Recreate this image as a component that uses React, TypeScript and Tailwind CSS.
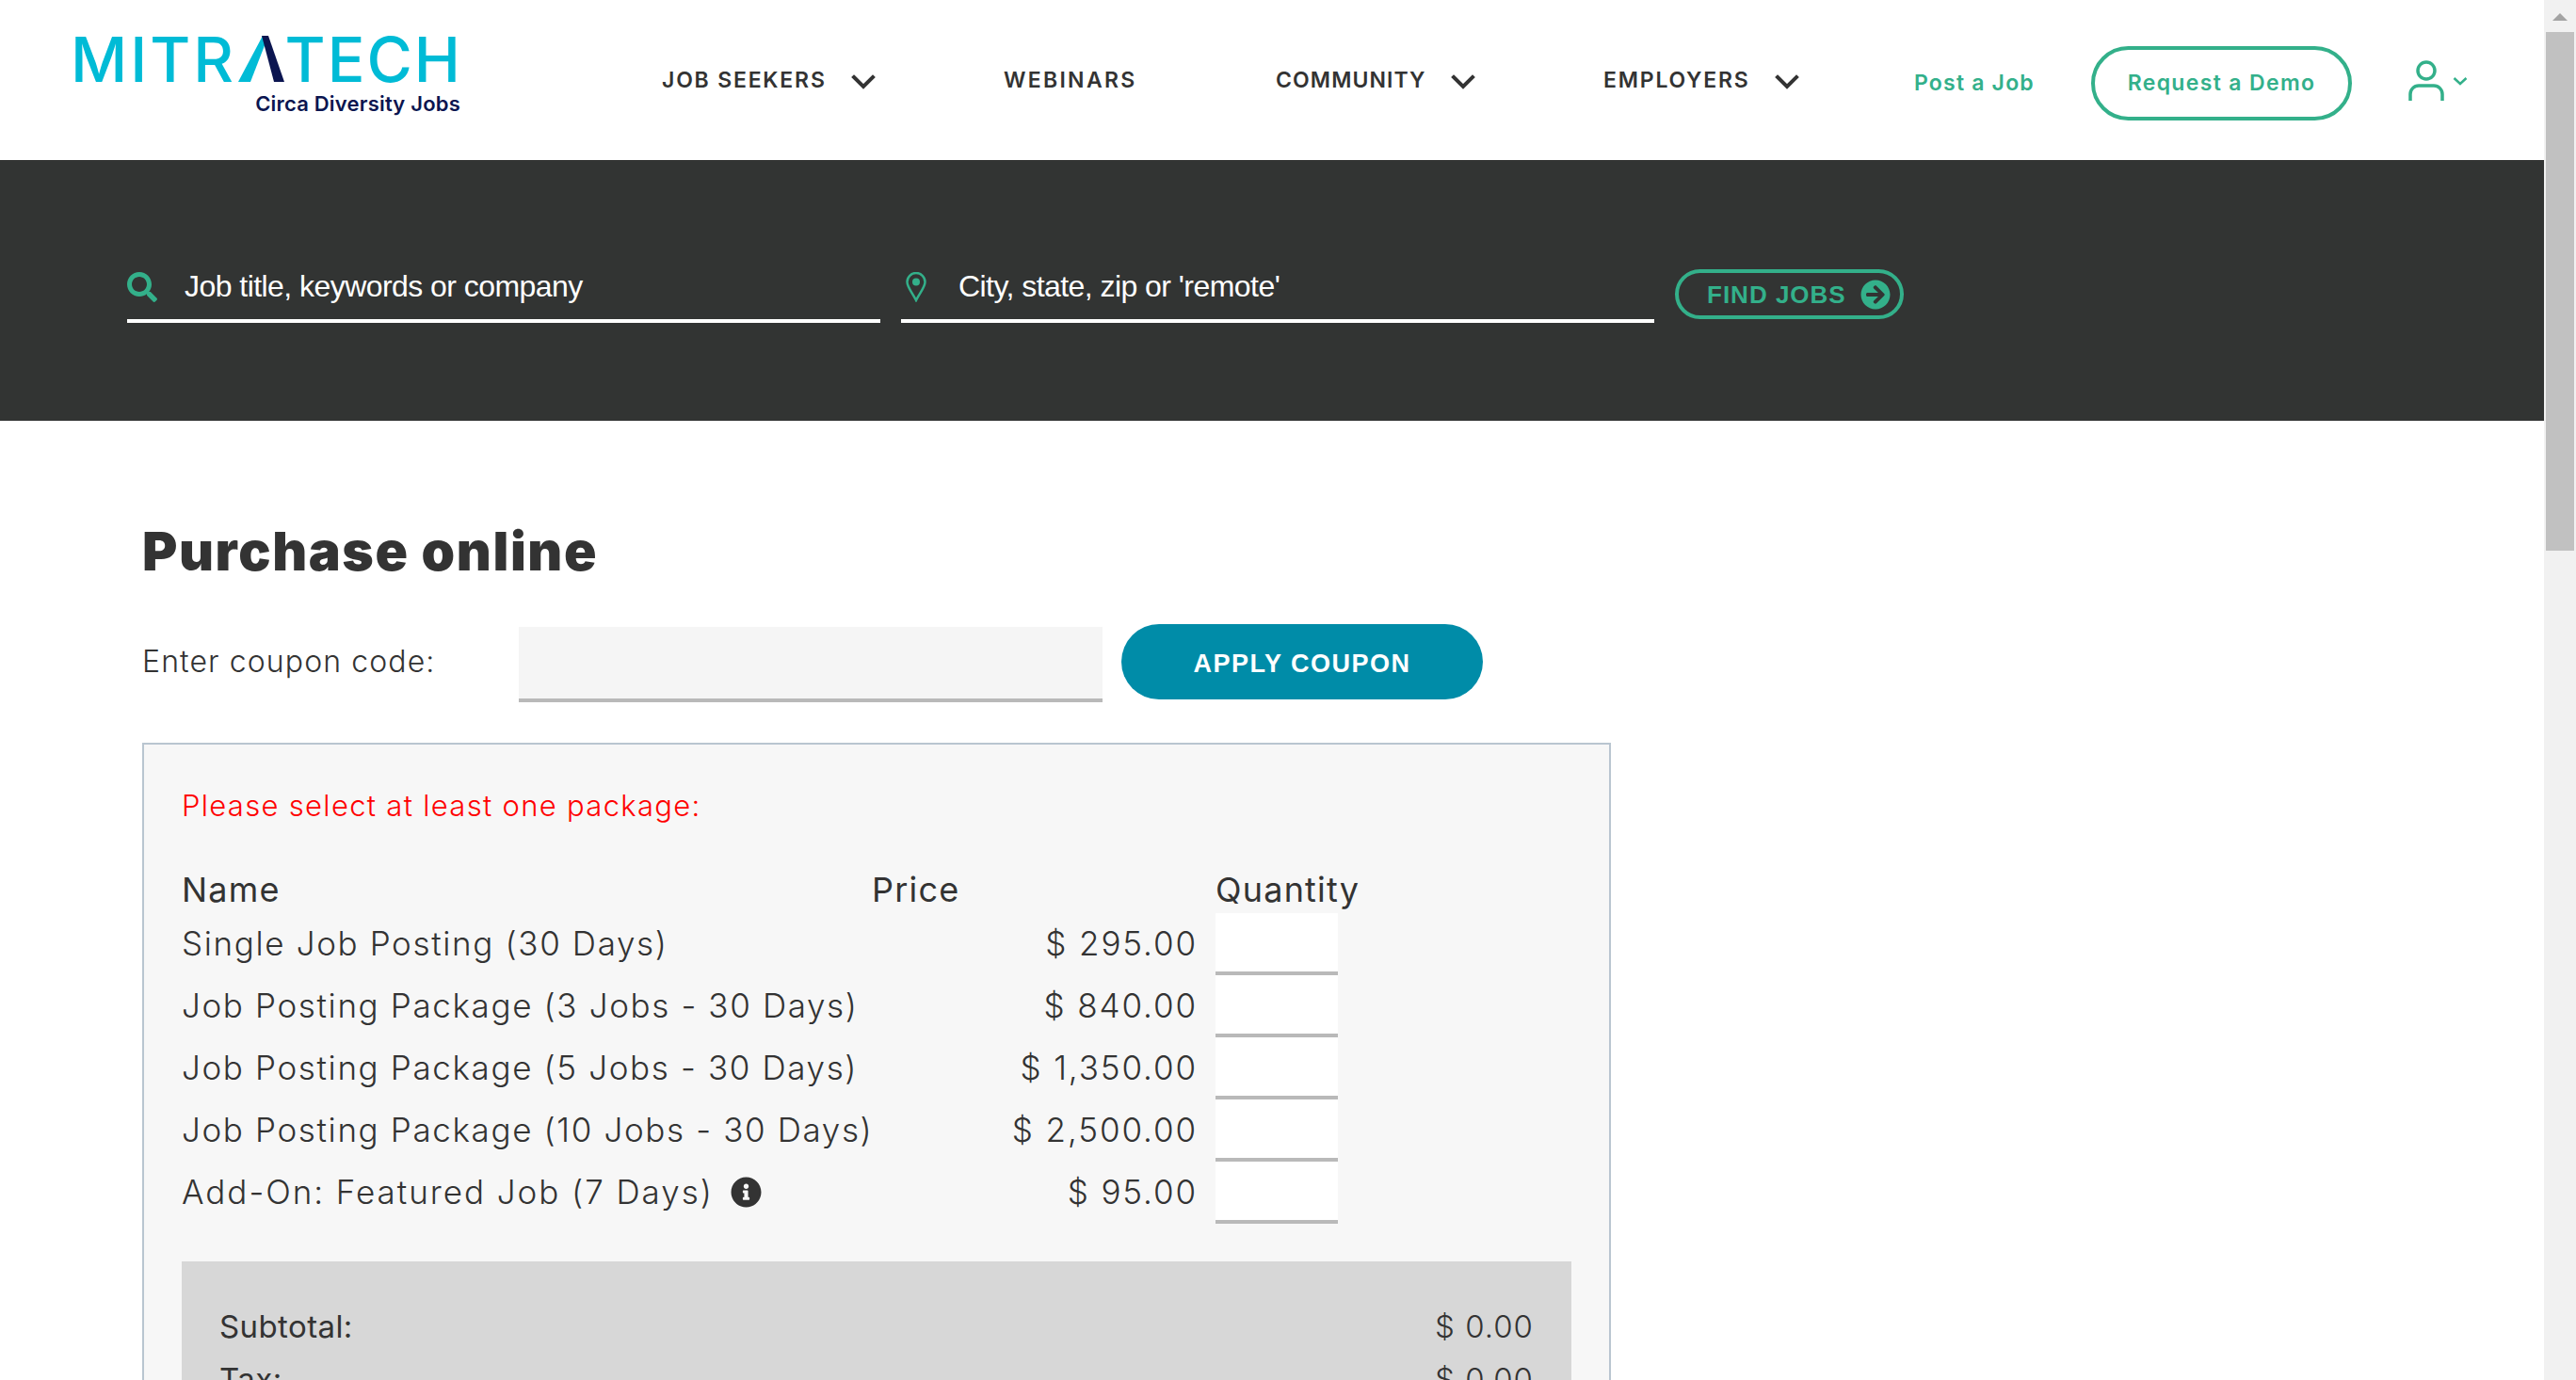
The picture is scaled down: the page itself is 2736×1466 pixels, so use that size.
import React from "react";
import { FaSearch, FaArrowCircleRight, FaInfoCircle } from "react-icons/fa";

const Chevron = ({ className }: { className: string }) => (
  <svg viewBox="0 0 26 16" className={className} fill="none" stroke="#333333" strokeWidth="4" strokeLinecap="square">
    <path d="M3 3 L13 13 L23 3" />
  </svg>
);

const NavItem = ({ label, chevron, className, tracking }: { label: string; chevron?: boolean; className: string; tracking: string }) => (
  <div className={`flex items-center ${className}`}>
    <span className={`whitespace-nowrap text-[23px] font-semibold leading-none text-[#333333] ${tracking}`}>{label}</span>
    {chevron && <Chevron className="ml-[26px] mt-[3px] h-4 w-[26px]" />}
  </div>
);

const packages = [
  { name: "Single Job Posting (30 Days)", price: "$ 295.00" },
  { name: "Job Posting Package (3 Jobs - 30 Days)", price: "$ 840.00" },
  { name: "Job Posting Package (5 Jobs - 30 Days)", price: "$ 1,350.00" },
  { name: "Job Posting Package (10 Jobs - 30 Days)", price: "$ 2,500.00" },
  { name: "Add-On: Featured Job (7 Days)", price: "$ 95.00", info: true },
];

export default function App() {
  return (
    <div className="flex h-[1466px] w-[2736px] overflow-hidden bg-white font-['Inter',sans-serif]">
      <div className="flex w-[2702px] shrink-0 flex-col">
        <header className="flex h-[170px] shrink-0 items-start pl-[75px]">
          <div className="mt-[30px] flex w-[416px] shrink-0 flex-col items-end">
            <div className="flex h-[66px] w-[416px] items-center justify-between font-['Inter',sans-serif] text-[66px] font-medium leading-none text-[#00bbd6]">
              <span className="tracking-[3px]">MITR</span>
              <svg viewBox="0 0 56 50" className="-mx-[6px] h-[50px] w-[56px] shrink-0">
                <path d="M30 0 L36 0 L17 49 L4 49 Z" fill="#00bbd6" />
                <path d="M29 0 L36 0 L53 49 L42 49 Z" fill="#0b1550" />
              </svg>
              <span className="tracking-[2px]">TECH</span>
            </div>
            <div className="mr-[2px] mt-[3px] font-['Inter',sans-serif] text-[22px] font-semibold leading-none tracking-[0.2px] text-[#0b1550]">
              Circa Diversity Jobs
            </div>
          </div>
          <div className="ml-[212px] flex h-[170px] items-center">
            <NavItem label="JOB SEEKERS" chevron tracking="tracking-[1.8px]" className="w-[363px]" />
            <NavItem label="WEBINARS" tracking="tracking-[2.3px]" className="w-[289px]" />
            <NavItem label="COMMUNITY" chevron tracking="tracking-[1.1px]" className="w-[348px]" />
            <NavItem label="EMPLOYERS" chevron tracking="tracking-[1.8px]" className="w-[330px]" />
          </div>
          <div className="flex h-[170px] items-center pb-[4px] pt-[11px]">
            <span className="w-[188px] whitespace-nowrap text-[23px] font-semibold tracking-[1.2px] text-[#33b08a]">Post a Job</span>
            <div className="flex h-[79px] w-[277px] items-center justify-center rounded-full border-[4px] border-[#33b08a] text-[23px] font-semibold tracking-[1.35px] text-[#33b08a]">
              Request a Demo
            </div>
            <svg viewBox="0 0 38 44" className="mb-[6px] ml-[60px] h-[44px] w-[38px]" fill="none" stroke="#33b08a" strokeWidth="3.5">
              <circle cx="19" cy="11" r="9" />
              <path d="M2 43 V36 a9 9 0 0 1 9 -9 H27 a9 9 0 0 1 9 9 V43" />
            </svg>
            <svg viewBox="0 0 16 10" className="mb-[5px] ml-[9px] h-[10px] w-4" fill="none" stroke="#33b08a" strokeWidth="2.5">
              <path d="M1.5 2 L8 8 L14.5 2" />
            </svg>
          </div>
        </header>

        <section className="flex h-[277px] shrink-0 bg-[#323433] pl-[135px] pt-[116px]">
          <div className="flex h-[57px] w-[800px] items-start border-b-[4px] border-white pt-[3px]">
            <FaSearch className="h-8 w-8 text-[#33b08a]" />
            <span className="-mt-[3px] ml-[29px] font-['Liberation_Sans',sans-serif] text-[32px] leading-[37px] tracking-[-0.55px] text-white">
              Job title, keywords or company
            </span>
          </div>
          <div className="ml-[22px] flex h-[57px] w-[800px] items-start border-b-[4px] border-white pl-[5px] pt-[3px]">
            <svg viewBox="0 0 22 32" className="h-8 w-[22px]" fill="none">
              <path d="M11 30 C7 22 1.5 16 1.5 10.5 a9.5 9.5 0 0 1 19 0 C20.5 16 15 22 11 30 Z" stroke="#33b08a" strokeWidth="2.5" />
              <circle cx="11" cy="10.5" r="4" fill="#33b08a" />
            </svg>
            <span className="-mt-[3px] ml-[34px] font-['Liberation_Sans',sans-serif] text-[32px] leading-[37px] tracking-[-0.55px] text-white">
              City, state, zip or 'remote'
            </span>
          </div>
          <div className="ml-[22px] flex h-[53px] w-[243px] items-center rounded-full border-[4px] border-[#33b08a] pl-[30px]">
            <span className="font-['Liberation_Sans',sans-serif] text-[26px] font-bold leading-none tracking-[1px] text-[#33b08a]">FIND JOBS</span>
            <FaArrowCircleRight className="ml-[15px] h-8 w-8 text-[#33b08a]" />
          </div>
        </section>

        <main className="pl-[151px]">
          <h1 className="mt-[108px] h-[63px] text-[57px] font-black leading-[62px] tracking-[1.6px] text-[#333333]">Purchase online</h1>
          <div className="mt-[48px] flex h-[83px] items-start">
            <span className="mt-[17px] w-[400px] text-[32px] font-light leading-[40px] tracking-[1.1px] text-[#333333]">Enter coupon code:</span>
            <div className="h-[80px] w-[620px] border-b-[4px] border-[#b9b9b9] bg-[#f5f5f5]" />
            <div className="ml-[20px] -mt-[3px] flex h-[80px] w-[384px] items-center justify-center rounded-full bg-[#008ca8] pt-[4px] font-['Liberation_Sans',sans-serif] text-[27px] font-bold tracking-[1.5px] text-white">
              APPLY COUPON
            </div>
          </div>
          <div className="mt-[40px] w-[1560px] border-2 border-[#b9c5d0] bg-[#f7f7f7] pl-[40px] pr-[39px]">
            <p className="mt-[45px] h-[40px] text-[31px] font-light leading-[40px] tracking-[1.3px] text-[#ff0000]">Please select at least one package:</p>
            <div className="mt-[49px] flex h-[40px] text-[36px] leading-[40px] tracking-[1.2px] text-[#333333]">
              <span className="w-[733px]">Name</span>
              <span className="w-[365px]">Price</span>
              <span>Quantity</span>
            </div>
            {packages.map((p, i) => (
              <div key={p.name} className={`flex h-[66px] items-end ${i === 0 ? "mt-[5px]" : ""}`}>
                <div className={`flex h-[66px] w-[733px] items-center whitespace-nowrap pb-[2px] text-[35px] font-light text-[#333333] ${p.info ? "tracking-[1.95px]" : "tracking-[1.63px]"}`}>
                  {p.name}
                  {p.info && <FaInfoCircle className="ml-[18px] h-[33px] w-[33px] text-[#333333]" />}
                </div>
                <div className="flex h-[66px] w-[346px] items-center justify-end pb-[2px] text-[35px] font-light tracking-[1.9px] text-[#333333]">{p.price}</div>
                <div className="ml-[19px] h-[66px] w-[130px] border-b-[4px] border-[#b9b9b9] bg-white" />
              </div>
            ))}
            <div className="mt-[40px] h-[200px] w-[1476px] bg-[#d7d7d7] px-[40px] pt-[49px] text-[33px] leading-[40px] tracking-[0.4px] text-[#333333]">
              <div className="flex h-[56px] justify-between"><span>Subtotal:</span><span className="font-light tracking-[1px]">$ 0.00</span></div>
              <div className="flex h-[56px] justify-between"><span>Tax:</span><span className="font-light tracking-[1px]">$ 0.00</span></div>
            </div>
          </div>
        </main>
      </div>

      <div className="flex w-[34px] shrink-0 flex-col bg-[#f1f1f1] px-[2px]">
        <div className="flex h-[34px] items-start justify-center pt-[14px]">
          <div className="h-0 w-0 border-x-[8px] border-b-[8px] border-x-transparent border-b-[#a3a3a3]" />
        </div>
        <div className="h-[551px] bg-[#c1c1c1]" />
      </div>
    </div>
  );
}
